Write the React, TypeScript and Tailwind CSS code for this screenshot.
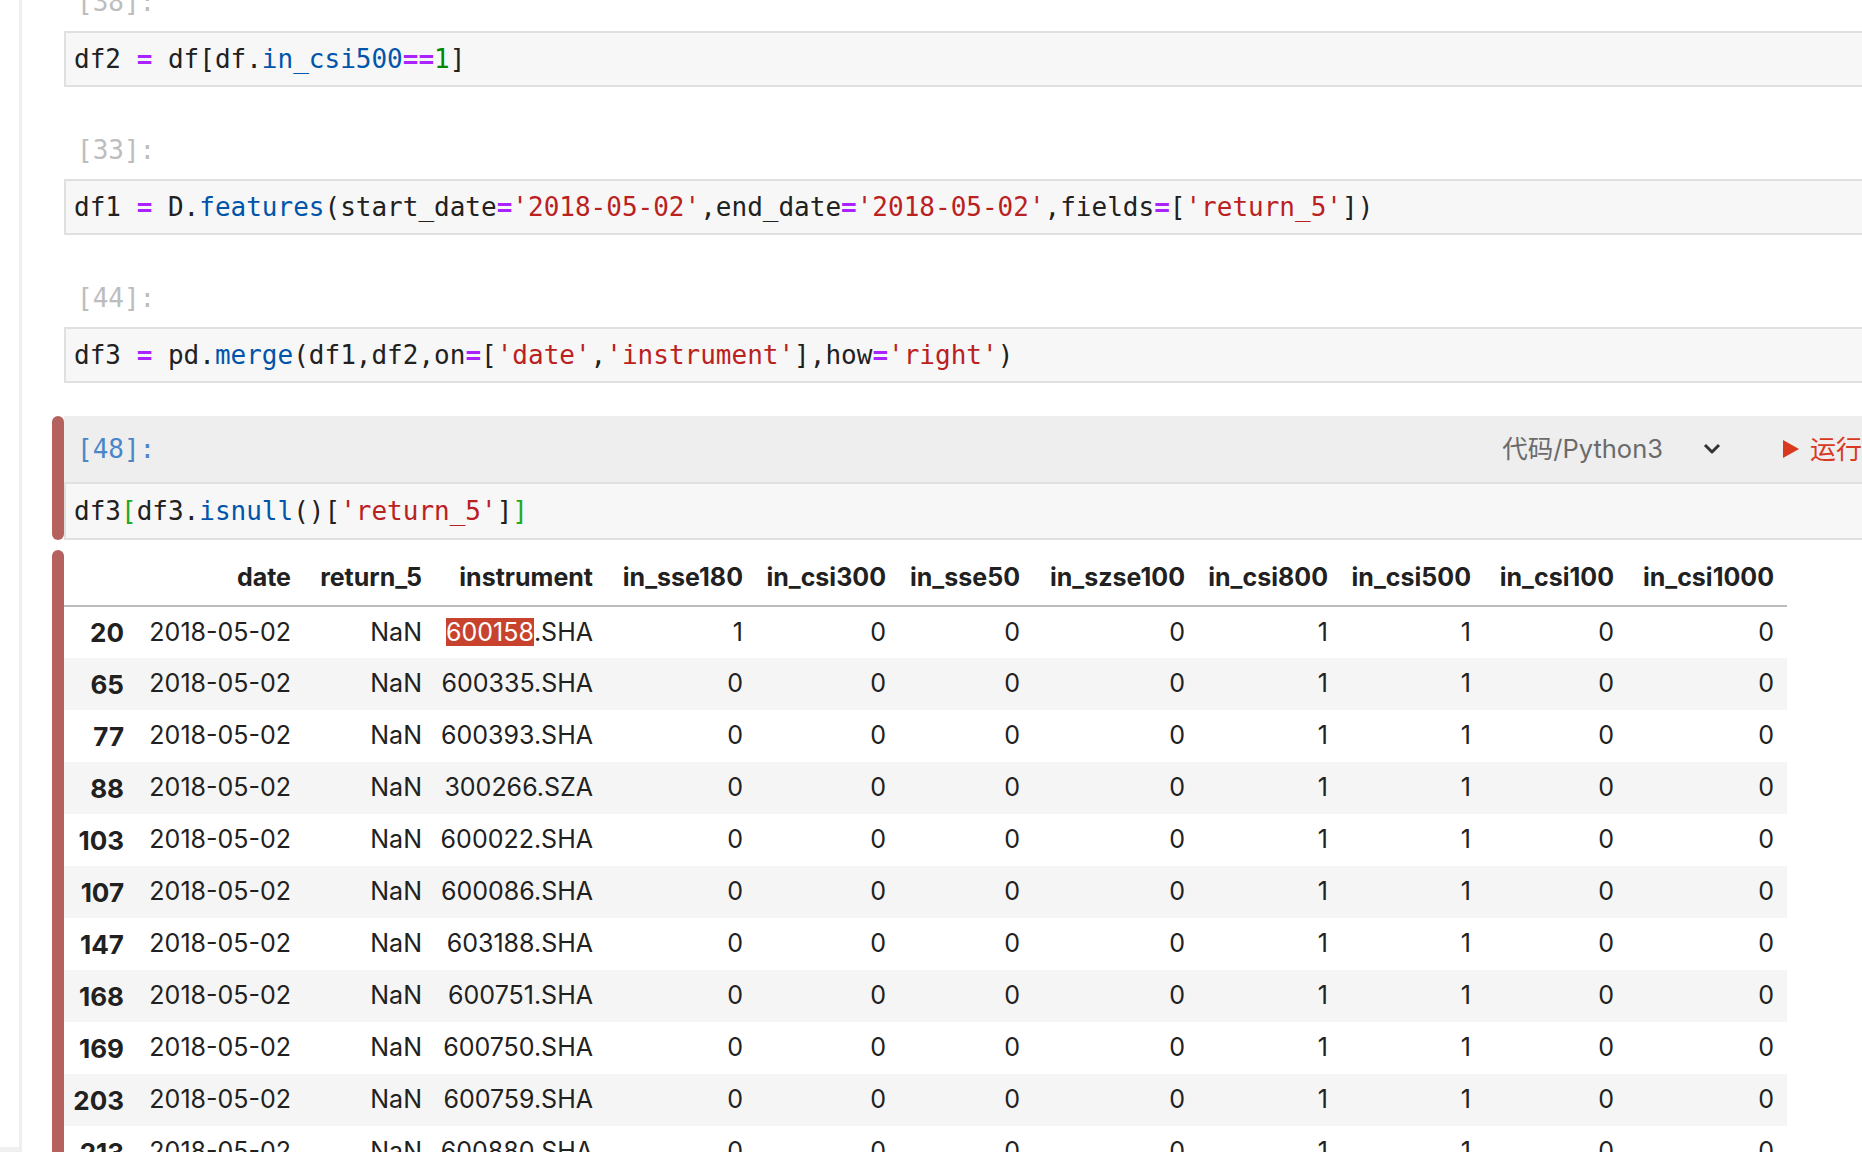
import React from 'react'

const mono = { fontFamily: '"DejaVu Sans Mono", "Liberation Mono", monospace' }

type Tok = [string, string?]

const C = {
  op: 'text-[#aa22ff] font-bold',
  prop: 'text-[#0055aa]',
  num: 'text-[#008800]',
  str: 'text-[#ba2121]',
  match: 'text-[#22aa22]',
}

function Code({ toks }: { toks: Tok[] }) {
  return (
    <pre className="m-0 text-[26px] leading-[30px] text-[#212121] whitespace-pre" style={mono}>
      {toks.map(([t, cls], i) => (
        <span key={i} className={cls}>
          {t}
        </span>
      ))}
    </pre>
  )
}

function Prompt({ n, active }: { n: number; active?: boolean }) {
  return (
    <div
      className={`h-[40px] leading-[40px] text-[26px] pl-[13px] ${active ? 'text-[#4a86c8]' : 'text-[#bdbdbd]'}`}
      style={mono}
    >
      [{n}]:
    </div>
  )
}

function InactiveCell({ n, toks, first }: { n: number; toks: Tok[]; first?: boolean }) {
  return (
    <div className={`flex ${first ? '-mt-[18px]' : 'mt-[43px]'}`}>
      <div className="w-[12px] shrink-0" />
      <div className="flex-1 min-w-0">
        <Prompt n={n} />
        <div className="mt-[9px] h-[56px] flex items-center pl-[8px] bg-[#f7f7f7] border-y-2 border-l-2 border-[#e0e0e0]">
          <Code toks={toks} />
        </div>
      </div>
    </div>
  )
}

const cols = [
  { h: '', w: 'w-[73px]' },
  { h: 'date', w: 'w-[167px]' },
  { h: 'return_5', w: 'w-[131px]' },
  { h: 'instrument', w: 'w-[171px]' },
  { h: 'in_sse180', w: 'w-[150px]' },
  { h: 'in_csi300', w: 'w-[143px]' },
  { h: 'in_sse50', w: 'w-[134px]' },
  { h: 'in_szse100', w: 'w-[165px]' },
  { h: 'in_csi800', w: 'w-[143px]' },
  { h: 'in_csi500', w: 'w-[143px]' },
  { h: 'in_csi100', w: 'w-[143px]' },
  { h: 'in_csi1000', w: 'w-[160px]' },
]

const rows: [number, string, number][] = [
  [20, '600158.SHA', 1],
  [65, '600335.SHA', 0],
  [77, '600393.SHA', 0],
  [88, '300266.SZA', 0],
  [103, '600022.SHA', 0],
  [107, '600086.SHA', 0],
  [147, '603188.SHA', 0],
  [168, '600751.SHA', 0],
  [169, '600750.SHA', 0],
  [203, '600759.SHA', 0],
  [213, '600880.SHA', 0],
]

export default function App() {
  return (
    <div
      className="w-[1862px] h-[1152px] overflow-hidden bg-white flex"
      style={{ fontFamily: 'Inter, "Noto Sans CJK SC", sans-serif' }}
    >
      {/* left rail */}
      <div className="w-[19px] shrink-0 flex flex-col">
        <div className="flex-1" />
        <div className="h-[5px] bg-[#f0f0f0]" />
      </div>
      <div className="w-[3px] shrink-0 bg-[#efefef]" />

      <div className="flex-1 min-w-0 pl-[30px]">
        <InactiveCell
          first
          n={38}
          toks={[['df2 '], ['=', C.op], [' df[df.'], ['in_csi500', C.prop], ['==', C.op], ['1', C.num], [']']]}
        />
        <InactiveCell
          n={33}
          toks={[
            ['df1 '],
            ['=', C.op],
            [' D.'],
            ['features', C.prop],
            ['(start_date'],
            ['=', C.op],
            ["'2018-05-02'", C.str],
            [',end_date'],
            ['=', C.op],
            ["'2018-05-02'", C.str],
            [',fields'],
            ['=', C.op],
            ['['],
            ["'return_5'", C.str],
            ['])'],
          ]}
        />
        <InactiveCell
          n={44}
          toks={[
            ['df3 '],
            ['=', C.op],
            [' pd.'],
            ['merge', C.prop],
            ['(df1,df2,on'],
            ['=', C.op],
            ['['],
            ["'date'", C.str],
            [','],
            ["'instrument'", C.str],
            ['],how'],
            ['=', C.op],
            ["'right'", C.str],
            [')'],
          ]}
        />

        {/* active cell */}
        <div className="flex mt-[33px]">
          <div className="w-[12px] shrink-0 rounded-[6px] bg-[#b5625f]" />
          <div className="flex-1 min-w-0">
            <div className="h-[66px] bg-[#eeeeee] flex items-center">
              <Prompt n={48} active />
              <div className="ml-auto flex items-center">
                <span className="text-[25.5px] text-[#6b6b6b]">代码/Python3</span>
                <svg className="ml-[40px]" width="18" height="12" viewBox="0 0 18 12">
                  <polyline points="2,2 9,9 16,2" fill="none" stroke="#333" strokeWidth="3" strokeLinejoin="round" />
                </svg>
                <svg className="ml-[62px]" width="16" height="18" viewBox="0 0 16 18">
                  <polygon points="0,0 16,9 0,18" fill="#d8391f" />
                </svg>
                <span className="ml-[11px] text-[26px] text-[#d8391f]">运行</span>
              </div>
            </div>
            <div className="h-[58px] flex items-center pl-[8px] bg-[#f7f7f7] border-y-2 border-l-2 border-[#e0e0e0]">
              <Code
                toks={[
                  ['df3'],
                  ['[', C.match],
                  ['df3.'],
                  ['isnull', C.prop],
                  ['()['],
                  ["'return_5'", C.str],
                  [']'],
                  [']', C.match],
                ]}
              />
            </div>
          </div>
        </div>

        {/* output */}
        <div className="flex mt-[10px] h-[700px]">
          <div className="w-[12px] shrink-0 rounded-t-[6px] bg-[#b5625f]" />
          <div className="flex-1 min-w-0">
            <table className="table-fixed border-collapse text-[25px] text-[#212121] whitespace-nowrap">
              <colgroup>
                {cols.map((c, i) => (
                  <col key={i} className={c.w} />
                ))}
              </colgroup>
              <thead>
                <tr className="h-[56px] border-b-2 border-[#bdbdbd]">
                  {cols.map((c, i) => (
                    <th key={i} className="text-right pr-[13px] font-bold text-[25px]">
                      {c.h}
                    </th>
                  ))}
                </tr>
              </thead>
              <tbody>
                {rows.map(([idx, ins, sse], r) => (
                  <tr key={idx} className={`h-[52px] ${r % 2 === 1 ? 'bg-[#f5f5f5]' : 'bg-white'}`}>
                    <td className="text-right pr-[13px] font-bold text-[26px]">{idx}</td>
                    <td className="text-right pr-[13px]">2018-05-02</td>
                    <td className="text-right pr-[13px]">NaN</td>
                    <td className="text-right pr-[13px]">
                      {r === 0 ? (
                        <>
                          <span className="inline-block leading-[28px] bg-[#c8432d] text-white">600158</span>
                          .SHA
                        </>
                      ) : (
                        ins
                      )}
                    </td>
                    <td className="text-right pr-[13px]">{sse}</td>
                    <td className="text-right pr-[13px]">0</td>
                    <td className="text-right pr-[13px]">0</td>
                    <td className="text-right pr-[13px]">0</td>
                    <td className="text-right pr-[13px]">1</td>
                    <td className="text-right pr-[13px]">1</td>
                    <td className="text-right pr-[13px]">0</td>
                    <td className="text-right pr-[13px]">0</td>
                  </tr>
                ))}
              </tbody>
            </table>
          </div>
        </div>
      </div>
    </div>
  )
}
